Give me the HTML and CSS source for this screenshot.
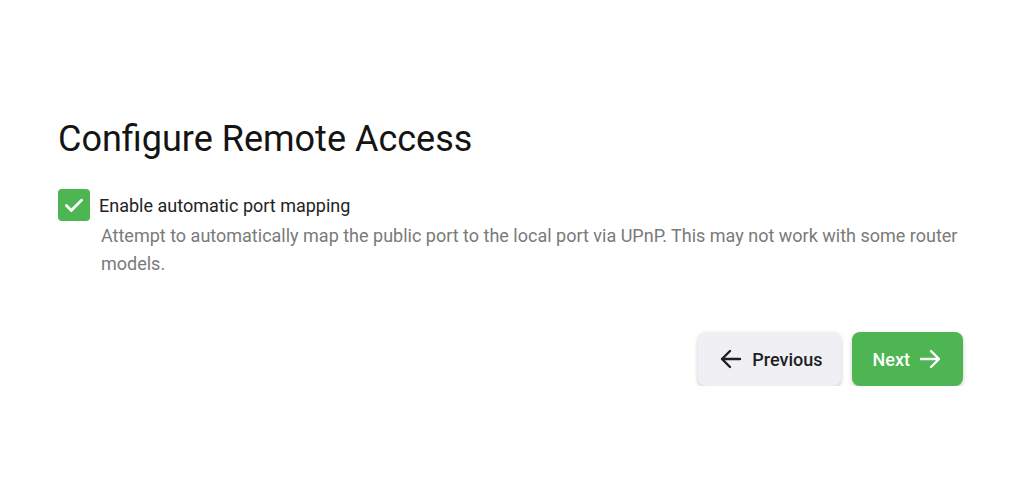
FILE: index.html
```html
<!DOCTYPE html>
<html lang="en">
<head>
<meta charset="utf-8">
<link rel="stylesheet" href="styles.css">
</head>
<body>
<main class="page">
  <h1 class="title">Configure Remote Access</h1>
  <div class="option">
    <label class="check-row">
      <span class="checkbox">
        <svg viewBox="0 0 24 24" width="26" height="26"><path d="M5 12.5l4.5 4.5L19 7.5" fill="none" stroke="#fff" stroke-width="2.6" stroke-linecap="round" stroke-linejoin="round"/></svg>
      </span>
      <span class="label">Enable automatic port mapping</span>
    </label>
    <p class="hint">Attempt to automatically map the public port to the local port via UPnP. This may not work with some router models.</p>
  </div>
  <div class="actions">
    <button class="btn btn-secondary">
      <svg class="icon" viewBox="0 0 24 24" width="24" height="24"><path d="M21 12H3M11 4l-8 8 8 8" fill="none" stroke="currentColor" stroke-width="2.4" stroke-linecap="round" stroke-linejoin="round"/></svg>
      <span>Previous</span>
    </button>
    <button class="btn btn-primary">
      <span>Next</span>
      <svg class="icon" viewBox="0 0 24 24" width="24" height="24"><path d="M3 12h18M13 4l8 8-8 8" fill="none" stroke="currentColor" stroke-width="2.4" stroke-linecap="round" stroke-linejoin="round"/></svg>
    </button>
  </div>
</main>
</body>
</html>
```
FILE: styles.css
```css
* { box-sizing: border-box; }
html, body { margin: 0; padding: 0; background: #fff; }
body { font-family: Roboto, "Noto Sans", sans-serif; color: #1f1f1f; }
.page { padding: 119px 66px 0 58px; }
.title { margin: 0; font-size: 36px; font-weight: 400; line-height: 40px; color: #141414; }
.option { margin-top: 30px; }
.check-row { display: flex; align-items: center; gap: 9px; }
.checkbox { width: 32px; height: 32px; border-radius: 4px; background: #4db551; display: flex; align-items: center; justify-content: center; }
.label { font-size: 18px; color: #232323; }
.hint { margin: 1px 0 0 43px; font-size: 18px; line-height: 28px; color: #7a7a7a; }
.actions { display: flex; justify-content: flex-end; gap: 11px; margin-top: 54px; }
.btn { display: flex; align-items: center; gap: 9px; height: 54px; border: 0; border-radius: 8px; font-family: Roboto, sans-serif; font-size: 18px; font-weight: 500; cursor: pointer; box-shadow: 0 2px 4px rgba(0,0,0,0.22); }
.icon { flex: none; }
.btn-secondary { background: #f0eff4; color: #1f1f1f; padding: 0 18px 0 21px; }
.btn-primary { background: #4db551; color: #fff; padding: 0 21px 0 21px; gap: 8px; }
```
